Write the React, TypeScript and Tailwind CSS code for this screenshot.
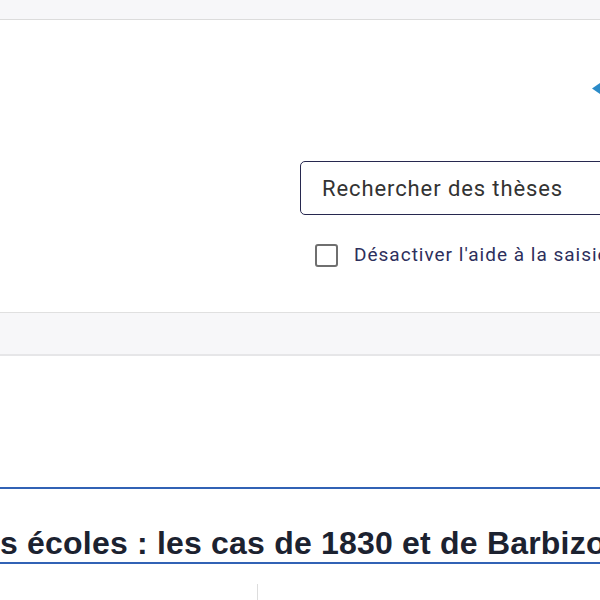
export default function App() {
  return (
    <div className="w-[600px] h-[600px] overflow-hidden bg-white font-['Roboto',sans-serif]">
      {/* top strip */}
      <div className="h-[20px] bg-[#f7f7f9] border-b border-[#dcdcdc]" />

      {/* search area */}
      <section className="h-[292px] flex flex-col">
        <div className="flex justify-end pt-[63px] h-[141px]">
          <svg width="8" height="11" viewBox="0 0 8 11">
            <polygon points="0,5.5 8,0 8,11" fill="#2b8bc8" />
          </svg>
        </div>
        <div className="flex">
          <div className="w-[300px] shrink-0" />
          <div className="flex flex-col w-[420px] shrink-0">
            <div className="h-[54px] rounded-[5px] border border-[#27284f] flex items-center pl-[21px]">
              <span className="text-[22px] tracking-[0.9px] text-[#333] whitespace-nowrap">Rechercher des thèses</span>
            </div>
            <label className="flex items-center gap-[16px] pl-[15px] mt-[26px]">
              <span className="w-[23px] h-[23px] rounded-[3px] border-2 border-[#6f6f6f] bg-white shrink-0" />
              <span className="text-[19px] tracking-[1px] text-[#2d2f5c] whitespace-nowrap">Désactiver l'aide à la saisie</span>
            </label>
          </div>
        </div>
      </section>

      {/* grey band */}
      <div className="h-[44px] bg-[#f7f7f9] border-t border-[#e0e0e0] border-b-2 border-b-[#e6e6e8]" />

      <div className="h-[131px]" />

      {/* title */}
      <div className="border-y-2 border-[#3162b5] h-[77px] pt-[36px] overflow-hidden">
        <h1 className="font-['Liberation_Sans',Arial,sans-serif] font-bold text-[32px] tracking-[0.2px] leading-[36px] text-[#1c2230] whitespace-nowrap">
          s écoles : les cas de 1830 et de Barbizon
        </h1>
      </div>

      <div className="flex mt-[20px] h-[40px]">
        <div className="w-[258px] border-r border-[#dddddd]" />
        <div className="flex-1" />
      </div>
    </div>
  );
}
